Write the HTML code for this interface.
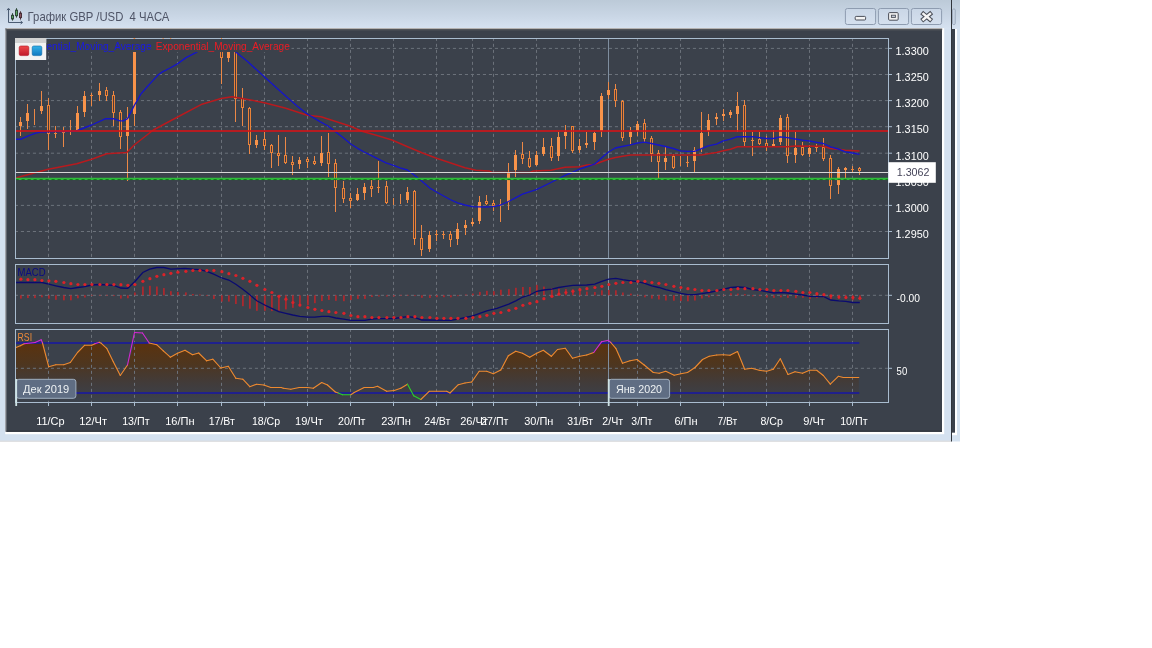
<!DOCTYPE html>
<html lang="ru"><head><meta charset="utf-8"><title>График GBP /USD 4 ЧАСА</title>
<style>html,body{margin:0;padding:0;background:#fff;overflow:hidden}svg{display:block;will-change:transform}text{white-space:pre}</style></head>
<body>
<svg width="1152" height="648" viewBox="0 0 1152 648">
<defs>
<linearGradient id="tb" x1="0" y1="0" x2="0" y2="1"><stop offset="0" stop-color="#bccad8"/><stop offset="0.5" stop-color="#c8d5e4"/><stop offset="1" stop-color="#d6e2f1"/></linearGradient>
<linearGradient id="rsi" gradientUnits="userSpaceOnUse" x1="0" y1="336" x2="0" y2="398"><stop offset="0" stop-color="#633104" stop-opacity="0.95"/><stop offset="0.45" stop-color="#583008" stop-opacity="0.66"/><stop offset="1" stop-color="#4a3020" stop-opacity="0.05"/></linearGradient>
<linearGradient id="btn" x1="0" y1="0" x2="0" y2="1"><stop offset="0" stop-color="#c9d6e6"/><stop offset="1" stop-color="#d5e0ee"/></linearGradient>
<linearGradient id="lr" x1="0" y1="0" x2="0" y2="1"><stop offset="0" stop-color="#ee4a4a"/><stop offset="1" stop-color="#c0182a"/></linearGradient>
<linearGradient id="lb" x1="0" y1="0" x2="0" y2="1"><stop offset="0" stop-color="#35b2e8"/><stop offset="1" stop-color="#0f78c0"/></linearGradient>
<clipPath id="cm"><rect x="16" y="52" width="872.5" height="206.5"/></clipPath>
<clipPath id="cmf"><rect x="16" y="39" width="872.5" height="219.5"/></clipPath>
<clipPath id="cr"><rect x="16" y="343.2" width="872.5" height="59"/></clipPath>
</defs>
<rect x="0" y="0" width="1152" height="648" fill="#ffffff"/>
<rect x="951" y="0" width="9" height="441.5" fill="#d5e2f0"/>
<rect x="951" y="0" width="9" height="29" fill="url(#tb)"/>
<rect x="952" y="29" width="3" height="403.8" fill="#3b414b"/>
<rect x="955" y="29" width="2" height="406" fill="#ffffff"/>
<rect x="952" y="432.8" width="5" height="2.4" fill="#ffffff"/>
<rect x="952.6" y="9" width="2.6" height="15.5" rx="1" fill="#ccd8e8" stroke="#8f9db0" stroke-width="0.8"/>
<rect x="0" y="0" width="951" height="441.5" fill="#d4e1f0"/>
<rect x="0" y="0" width="951" height="29" fill="url(#tb)"/>
<rect x="0" y="440.6" width="951" height="1.2" fill="#dddddd"/>
<rect x="951" y="0" width="1" height="441.5" fill="#30343b"/>
<rect x="5.2" y="28.2" width="939" height="406" fill="#ffffff"/>
<rect x="5.2" y="28.2" width="937" height="1" fill="#a3a19e"/>
<rect x="5.2" y="29.2" width="937" height="1" fill="#5c5d60"/>
<rect x="5.2" y="28.2" width="1.6" height="403.6" fill="#8a8e96"/>
<rect x="6.4" y="29.3" width="935.6" height="402.5" fill="#3b414b"/>
<rect x="6.4" y="29.2" width="935.6" height="1.2" fill="#53555a"/>
<rect x="6.4" y="430.6" width="935.6" height="1.2" fill="#2f343d"/>
<g fill="none" stroke="#4b5c73" stroke-width="1">
<path d="M8.5 9 V22.5 H22"/><path d="M7 10.2 L8.5 8.2 L10 10.2 M20.6 21 L22.6 22.5 L20.6 24"/>
</g>
<g stroke="#2f4a3a" stroke-width="1">
<path d="M12.5 13.2V20.6" /><rect x="11.5" y="15.3" width="2" height="3.6" fill="#5aa860"/>
<path d="M16.5 8.2V17.6"/><rect x="15.5" y="10.2" width="2" height="5.5" fill="#5aa860"/>
</g>
<g stroke="#4a3038" stroke-width="1"><path d="M20.5 11.3V19.6"/><rect x="19.5" y="13.2" width="2" height="4.4" fill="#8a5560"/></g>
<text x="27.6" y="20.6" font-family="'Liberation Sans', sans-serif" font-size="12.6" fill="#4e5466" textLength="141.8" lengthAdjust="spacingAndGlyphs" xml:space="preserve">График GBP /USD  4 ЧАСА</text>
<rect x="845.4" y="8.5" width="30.2" height="16" rx="2" fill="url(#btn)" stroke="#8e9cb0" stroke-width="1"/>
<rect x="878.4" y="8.5" width="30.2" height="16" rx="2" fill="url(#btn)" stroke="#8e9cb0" stroke-width="1"/>
<rect x="911.4" y="8.5" width="30.2" height="16" rx="2" fill="url(#btn)" stroke="#8e9cb0" stroke-width="1"/>
<rect x="855.2" y="16.4" width="10.4" height="3.6" rx="1" fill="#f4f4f4" stroke="#4a4e58" stroke-width="1"/>
<rect x="888.6" y="12.6" width="9.6" height="7.6" rx="1" fill="#f0f0f0" stroke="#4a4e58" stroke-width="1"/>
<rect x="891.4" y="15.2" width="4" height="2.2" fill="#c8d0dc" stroke="#4a4e58" stroke-width="0.9"/>
<path d="M923.4 13.9 L930 19.4 M930 13.9 L923.4 19.4" stroke="#4a4e58" stroke-width="4.5" stroke-linecap="square" fill="none"/>
<path d="M923.4 13.9 L930 19.4 M930 13.9 L923.4 19.4" stroke="#f4f4f4" stroke-width="2.5" stroke-linecap="square" fill="none"/>
<polygon points="16.0,347.5 20.3,345.8 24.2,343.8 35.0,343.2 41.2,343.2 42.5,343.2 48.7,366.7 55.8,364.7 63.7,364.7 70.3,362.5 77.5,352.5 84.5,345.3 91.7,345.3 95.0,343.7 99.2,343.2 101.3,343.3 106.7,348.3 113.3,361.7 120.3,375.5 127.5,365.0 134.5,343.2 142.5,343.2 149.2,343.2 156.7,344.7 163.3,350.8 170.3,357.2 177.5,353.3 185.0,350.3 192.5,354.7 198.7,353.0 206.7,360.8 212.8,359.2 220.8,368.0 228.3,366.3 235.8,378.3 242.8,379.2 249.8,386.7 256.7,384.2 263.8,385.0 270.8,387.5 281.3,387.5 283.3,388.3 290.8,389.2 299.2,387.5 307.5,387.5 313.3,388.3 321.7,382.5 327.5,385.0 335.3,392.0 338.3,393.0 342.5,394.7 350.8,394.7 354.2,392.5 364.2,387.5 373.3,387.5 377.5,386.3 386.7,391.3 394.2,390.5 400.8,388.3 407.5,384.2 413.7,395.8 420.8,399.5 429.2,391.3 446.7,391.3 450.0,393.0 458.3,384.7 465.0,383.0 471.7,382.0 479.2,371.3 486.7,371.3 493.3,373.7 500.8,370.0 508.3,355.8 515.8,351.2 522.5,353.3 529.7,357.2 536.7,353.3 543.3,350.3 551.3,356.3 557.5,349.5 565.3,348.3 572.5,358.3 579.7,356.3 586.7,355.0 593.7,352.5 601.7,343.2 608.3,343.2 610.8,343.2 615.8,348.3 622.5,363.3 630.0,360.8 637.0,359.5 644.2,365.0 653.3,372.5 659.2,373.3 665.8,371.3 674.2,375.3 680.8,373.7 687.5,372.5 695.0,367.5 702.5,359.5 709.2,356.3 716.7,355.0 723.3,354.7 730.0,355.3 737.5,351.5 744.7,369.2 751.7,368.3 759.2,370.3 766.7,371.3 773.3,369.2 780.3,358.8 788.0,374.5 795.0,371.7 802.5,373.3 809.5,370.3 816.7,370.3 823.3,375.5 830.3,384.2 838.3,376.3 843.3,377.5 858.8,377.5 858.8,398 16,398" fill="url(#rsi)"/>
<g stroke="#6b717a" stroke-width="1" stroke-dasharray="3.1 2.9" fill="none">
<path d="M48.5 52.2V258.5" stroke-dashoffset="2.4"/>
<path d="M91.5 52.2V258.5" stroke-dashoffset="2.4"/>
<path d="M134.5 52.2V258.5" stroke-dashoffset="2.4"/>
<path d="M177.5 52.2V258.5" stroke-dashoffset="2.4"/>
<path d="M221.5 52.2V258.5" stroke-dashoffset="2.4"/>
<path d="M264.5 52.2V258.5" stroke-dashoffset="2.4"/>
<path d="M307.5 38.5V258.5" stroke-dashoffset="0.7"/>
<path d="M350.5 38.5V258.5" stroke-dashoffset="0.7"/>
<path d="M393.5 38.5V258.5" stroke-dashoffset="0.7"/>
<path d="M436.5 38.5V258.5" stroke-dashoffset="0.7"/>
<path d="M472.5 38.5V258.5" stroke-dashoffset="0.7"/>
<path d="M493.5 38.5V258.5" stroke-dashoffset="0.7"/>
<path d="M536.5 38.5V258.5" stroke-dashoffset="0.7"/>
<path d="M579.5 38.5V258.5" stroke-dashoffset="0.7"/>
<path d="M637.5 38.5V258.5" stroke-dashoffset="0.7"/>
<path d="M680.5 38.5V258.5" stroke-dashoffset="0.7"/>
<path d="M723.5 38.5V258.5" stroke-dashoffset="0.7"/>
<path d="M766.5 38.5V258.5" stroke-dashoffset="0.7"/>
<path d="M809.5 38.5V258.5" stroke-dashoffset="0.7"/>
<path d="M852.5 38.5V258.5" stroke-dashoffset="0.7"/>
<path d="M48.5 264.5V323.5" stroke-dashoffset="0.7"/>
<path d="M91.5 264.5V323.5" stroke-dashoffset="0.7"/>
<path d="M134.5 264.5V323.5" stroke-dashoffset="0.7"/>
<path d="M177.5 264.5V323.5" stroke-dashoffset="0.7"/>
<path d="M221.5 264.5V323.5" stroke-dashoffset="0.7"/>
<path d="M264.5 264.5V323.5" stroke-dashoffset="0.7"/>
<path d="M307.5 264.5V323.5" stroke-dashoffset="0.7"/>
<path d="M350.5 264.5V323.5" stroke-dashoffset="0.7"/>
<path d="M393.5 264.5V323.5" stroke-dashoffset="0.7"/>
<path d="M436.5 264.5V323.5" stroke-dashoffset="0.7"/>
<path d="M472.5 264.5V323.5" stroke-dashoffset="0.7"/>
<path d="M493.5 264.5V323.5" stroke-dashoffset="0.7"/>
<path d="M536.5 264.5V323.5" stroke-dashoffset="0.7"/>
<path d="M579.5 264.5V323.5" stroke-dashoffset="0.7"/>
<path d="M637.5 264.5V323.5" stroke-dashoffset="0.7"/>
<path d="M680.5 264.5V323.5" stroke-dashoffset="0.7"/>
<path d="M723.5 264.5V323.5" stroke-dashoffset="0.7"/>
<path d="M766.5 264.5V323.5" stroke-dashoffset="0.7"/>
<path d="M809.5 264.5V323.5" stroke-dashoffset="0.7"/>
<path d="M852.5 264.5V323.5" stroke-dashoffset="0.7"/>
<path d="M48.5 329.5V402.5" stroke-dashoffset="0.7"/>
<path d="M91.5 329.5V402.5" stroke-dashoffset="0.7"/>
<path d="M134.5 329.5V402.5" stroke-dashoffset="0.7"/>
<path d="M177.5 329.5V402.5" stroke-dashoffset="0.7"/>
<path d="M221.5 329.5V402.5" stroke-dashoffset="0.7"/>
<path d="M264.5 329.5V402.5" stroke-dashoffset="0.7"/>
<path d="M307.5 329.5V402.5" stroke-dashoffset="0.7"/>
<path d="M350.5 329.5V402.5" stroke-dashoffset="0.7"/>
<path d="M393.5 329.5V402.5" stroke-dashoffset="0.7"/>
<path d="M436.5 329.5V402.5" stroke-dashoffset="0.7"/>
<path d="M472.5 329.5V402.5" stroke-dashoffset="0.7"/>
<path d="M493.5 329.5V402.5" stroke-dashoffset="0.7"/>
<path d="M536.5 329.5V402.5" stroke-dashoffset="0.7"/>
<path d="M579.5 329.5V402.5" stroke-dashoffset="0.7"/>
<path d="M637.5 329.5V402.5" stroke-dashoffset="0.7"/>
<path d="M680.5 329.5V402.5" stroke-dashoffset="0.7"/>
<path d="M723.5 329.5V402.5" stroke-dashoffset="0.7"/>
<path d="M766.5 329.5V402.5" stroke-dashoffset="0.7"/>
<path d="M809.5 329.5V402.5" stroke-dashoffset="0.7"/>
<path d="M852.5 329.5V402.5" stroke-dashoffset="0.7"/>
<path d="M291.5 48.4H888.5" stroke-dashoffset="0.6"/>
<path d="M15.5 74.5H888.5" stroke-dashoffset="0.6"/>
<path d="M15.5 100.6H888.5" stroke-dashoffset="0.6"/>
<path d="M15.5 126.7H888.5" stroke-dashoffset="0.6"/>
<path d="M15.5 153.2H888.5" stroke-dashoffset="0.6"/>
<path d="M15.5 179.1H888.5" stroke-dashoffset="0.6"/>
<path d="M15.5 205.4H888.5" stroke-dashoffset="0.6"/>
<path d="M15.5 231.5H888.5" stroke-dashoffset="0.6"/>
<path d="M15.5 368.3H888.5" stroke-dashoffset="0.6"/>
<path d="M15.5 295.3H888.5" stroke-dashoffset="0.6"/>
</g>
<path d="M608.5 38.5V258.5" stroke="#7f8e9f" stroke-width="1"/>
<path d="M608.5 264.5V323.5" stroke="#7f8e9f" stroke-width="1"/>
<path d="M608.5 329.5V402.5" stroke="#7f8e9f" stroke-width="1"/>
<g clip-path="url(#cm)">
<rect x="20" y="117" width="1" height="19" fill="#ec8846"/>
<rect x="19" y="122" width="3" height="4" fill="#f8934a"/>
<rect x="27" y="104" width="1" height="25" fill="#ec8846"/>
<rect x="26" y="113" width="3" height="8" fill="#f8934a"/>
<rect x="34" y="109" width="1" height="16" fill="#ec8846"/>
<rect x="41" y="91" width="1" height="23" fill="#ec8846"/>
<rect x="40" y="106" width="3" height="5" fill="#f8934a"/>
<rect x="48" y="98" width="1" height="52" fill="#ec8846"/>
<rect x="47" y="105" width="3" height="29" fill="#ea8238"/>
<rect x="48" y="106" width="1" height="27" fill="#4a3a3c"/>
<rect x="55" y="126" width="1" height="12" fill="#ec8846"/>
<rect x="54" y="133" width="3" height="1" fill="#ea8238"/>
<rect x="63" y="127" width="1" height="20" fill="#ec8846"/>
<rect x="62" y="132" width="3" height="1" fill="#ea8238"/>
<rect x="70" y="120" width="1" height="15" fill="#ec8846"/>
<rect x="77" y="106" width="1" height="24" fill="#ec8846"/>
<rect x="76" y="113" width="3" height="17" fill="#f8934a"/>
<rect x="84" y="91" width="1" height="26" fill="#ec8846"/>
<rect x="83" y="96" width="3" height="16" fill="#f8934a"/>
<rect x="91" y="93" width="1" height="13" fill="#ec8846"/>
<rect x="90" y="95" width="3" height="1" fill="#ea8238"/>
<rect x="99" y="83" width="1" height="18" fill="#ec8846"/>
<rect x="98" y="91" width="3" height="4" fill="#f8934a"/>
<rect x="106" y="87" width="1" height="14" fill="#ec8846"/>
<rect x="105" y="90" width="3" height="6" fill="#ea8238"/>
<rect x="106" y="91" width="1" height="4" fill="#4a3a3c"/>
<rect x="113" y="91" width="1" height="35" fill="#ec8846"/>
<rect x="112" y="95" width="3" height="18" fill="#ea8238"/>
<rect x="113" y="96" width="1" height="16" fill="#4a3a3c"/>
<rect x="120" y="110" width="1" height="39" fill="#ec8846"/>
<rect x="119" y="112" width="3" height="25" fill="#ea8238"/>
<rect x="120" y="113" width="1" height="23" fill="#4a3a3c"/>
<rect x="127" y="107" width="1" height="74" fill="#ec8846"/>
<rect x="126" y="118" width="3" height="18" fill="#f8934a"/>
<rect x="134" y="38" width="1" height="88" fill="#ec8846"/>
<rect x="133" y="44" width="3" height="70" fill="#f8934a"/>
<rect x="221" y="38" width="1" height="46" fill="#ec8846"/>
<rect x="220" y="40" width="3" height="18" fill="#ea8238"/>
<rect x="221" y="41" width="1" height="16" fill="#4a3a3c"/>
<rect x="228" y="38" width="1" height="24" fill="#ec8846"/>
<rect x="227" y="44" width="3" height="14" fill="#f8934a"/>
<rect x="235" y="40" width="1" height="82" fill="#ec8846"/>
<rect x="234" y="42" width="3" height="57" fill="#ea8238"/>
<rect x="235" y="43" width="1" height="55" fill="#4a3a3c"/>
<rect x="242" y="88" width="1" height="38" fill="#ec8846"/>
<rect x="241" y="98" width="3" height="10" fill="#ea8238"/>
<rect x="242" y="99" width="1" height="8" fill="#4a3a3c"/>
<rect x="249" y="107" width="1" height="47" fill="#ec8846"/>
<rect x="248" y="108" width="3" height="37" fill="#ea8238"/>
<rect x="249" y="109" width="1" height="35" fill="#4a3a3c"/>
<rect x="256" y="135" width="1" height="13" fill="#ec8846"/>
<rect x="255" y="140" width="3" height="5" fill="#f8934a"/>
<rect x="264" y="132" width="1" height="18" fill="#ec8846"/>
<rect x="263" y="139" width="3" height="7" fill="#ea8238"/>
<rect x="264" y="140" width="1" height="5" fill="#4a3a3c"/>
<rect x="271" y="144" width="1" height="24" fill="#ec8846"/>
<rect x="270" y="145" width="3" height="8" fill="#ea8238"/>
<rect x="271" y="146" width="1" height="6" fill="#4a3a3c"/>
<rect x="278" y="135" width="1" height="31" fill="#ec8846"/>
<rect x="277" y="153" width="3" height="3" fill="#ea8238"/>
<rect x="278" y="154" width="1" height="1" fill="#4a3a3c"/>
<rect x="285" y="137" width="1" height="27" fill="#ec8846"/>
<rect x="284" y="155" width="3" height="8" fill="#ea8238"/>
<rect x="285" y="156" width="1" height="6" fill="#4a3a3c"/>
<rect x="292" y="156" width="1" height="19" fill="#ec8846"/>
<rect x="291" y="162" width="3" height="3" fill="#ea8238"/>
<rect x="292" y="163" width="1" height="1" fill="#4a3a3c"/>
<rect x="299" y="157" width="1" height="12" fill="#ec8846"/>
<rect x="298" y="160" width="3" height="4" fill="#f8934a"/>
<rect x="307" y="157" width="1" height="11" fill="#ec8846"/>
<rect x="306" y="159" width="3" height="3" fill="#ea8238"/>
<rect x="307" y="160" width="1" height="1" fill="#4a3a3c"/>
<rect x="314" y="156" width="1" height="9" fill="#ec8846"/>
<rect x="313" y="161" width="3" height="3" fill="#ea8238"/>
<rect x="314" y="162" width="1" height="1" fill="#4a3a3c"/>
<rect x="321" y="136" width="1" height="30" fill="#ec8846"/>
<rect x="320" y="153" width="3" height="10" fill="#f8934a"/>
<rect x="328" y="133" width="1" height="44" fill="#ec8846"/>
<rect x="327" y="152" width="3" height="12" fill="#ea8238"/>
<rect x="328" y="153" width="1" height="10" fill="#4a3a3c"/>
<rect x="335" y="159" width="1" height="53" fill="#ec8846"/>
<rect x="334" y="163" width="3" height="25" fill="#ea8238"/>
<rect x="335" y="164" width="1" height="23" fill="#4a3a3c"/>
<rect x="343" y="181" width="1" height="22" fill="#ec8846"/>
<rect x="342" y="188" width="3" height="11" fill="#ea8238"/>
<rect x="343" y="189" width="1" height="9" fill="#4a3a3c"/>
<rect x="350" y="193" width="1" height="15" fill="#ec8846"/>
<rect x="349" y="198" width="3" height="3" fill="#ea8238"/>
<rect x="350" y="199" width="1" height="1" fill="#4a3a3c"/>
<rect x="357" y="188" width="1" height="13" fill="#ec8846"/>
<rect x="356" y="194" width="3" height="6" fill="#f8934a"/>
<rect x="364" y="183" width="1" height="17" fill="#ec8846"/>
<rect x="363" y="187" width="3" height="6" fill="#f8934a"/>
<rect x="371" y="180" width="1" height="17" fill="#ec8846"/>
<rect x="370" y="186" width="3" height="3" fill="#ea8238"/>
<rect x="371" y="187" width="1" height="1" fill="#4a3a3c"/>
<rect x="378" y="161" width="1" height="32" fill="#ec8846"/>
<rect x="377" y="187" width="3" height="1" fill="#ea8238"/>
<rect x="386" y="181" width="1" height="23" fill="#ec8846"/>
<rect x="385" y="186" width="3" height="17" fill="#ea8238"/>
<rect x="386" y="187" width="1" height="15" fill="#4a3a3c"/>
<rect x="393" y="198" width="1" height="7" fill="#ec8846"/>
<rect x="400" y="194" width="1" height="10" fill="#ec8846"/>
<rect x="407" y="187" width="1" height="16" fill="#ec8846"/>
<rect x="406" y="192" width="3" height="8" fill="#f8934a"/>
<rect x="414" y="190" width="1" height="55" fill="#ec8846"/>
<rect x="413" y="191" width="3" height="48" fill="#ea8238"/>
<rect x="414" y="192" width="1" height="46" fill="#4a3a3c"/>
<rect x="421" y="225" width="1" height="31" fill="#ec8846"/>
<rect x="420" y="238" width="3" height="12" fill="#ea8238"/>
<rect x="421" y="239" width="1" height="10" fill="#4a3a3c"/>
<rect x="429" y="231" width="1" height="21" fill="#ec8846"/>
<rect x="428" y="235" width="3" height="14" fill="#f8934a"/>
<rect x="436" y="230" width="1" height="11" fill="#ec8846"/>
<rect x="435" y="234" width="3" height="1" fill="#ea8238"/>
<rect x="443" y="231" width="1" height="8" fill="#ec8846"/>
<rect x="442" y="234" width="3" height="1" fill="#ea8238"/>
<rect x="450" y="231" width="1" height="16" fill="#ec8846"/>
<rect x="449" y="234" width="3" height="6" fill="#ea8238"/>
<rect x="450" y="235" width="1" height="4" fill="#4a3a3c"/>
<rect x="457" y="223" width="1" height="22" fill="#ec8846"/>
<rect x="456" y="229" width="3" height="10" fill="#f8934a"/>
<rect x="465" y="220" width="1" height="15" fill="#ec8846"/>
<rect x="464" y="225" width="3" height="3" fill="#f8934a"/>
<rect x="472" y="218" width="1" height="8" fill="#ec8846"/>
<rect x="471" y="222" width="3" height="2" fill="#f8934a"/>
<rect x="479" y="196" width="1" height="28" fill="#ec8846"/>
<rect x="478" y="202" width="3" height="19" fill="#f8934a"/>
<rect x="486" y="195" width="1" height="10" fill="#ec8846"/>
<rect x="485" y="201" width="3" height="3" fill="#ea8238"/>
<rect x="486" y="202" width="1" height="1" fill="#4a3a3c"/>
<rect x="493" y="200" width="1" height="11" fill="#ec8846"/>
<rect x="492" y="203" width="3" height="3" fill="#ea8238"/>
<rect x="493" y="204" width="1" height="1" fill="#4a3a3c"/>
<rect x="500" y="199" width="1" height="23" fill="#ec8846"/>
<rect x="499" y="204" width="3" height="1" fill="#ea8238"/>
<rect x="508" y="163" width="1" height="47" fill="#ec8846"/>
<rect x="507" y="172" width="3" height="30" fill="#f8934a"/>
<rect x="515" y="150" width="1" height="27" fill="#ec8846"/>
<rect x="514" y="155" width="3" height="15" fill="#f8934a"/>
<rect x="522" y="142" width="1" height="22" fill="#ec8846"/>
<rect x="521" y="154" width="3" height="5" fill="#ea8238"/>
<rect x="522" y="155" width="1" height="3" fill="#4a3a3c"/>
<rect x="529" y="151" width="1" height="17" fill="#ec8846"/>
<rect x="528" y="158" width="3" height="9" fill="#ea8238"/>
<rect x="529" y="159" width="1" height="7" fill="#4a3a3c"/>
<rect x="536" y="151" width="1" height="15" fill="#ec8846"/>
<rect x="535" y="155" width="3" height="10" fill="#f8934a"/>
<rect x="543" y="138" width="1" height="18" fill="#ec8846"/>
<rect x="542" y="147" width="3" height="7" fill="#f8934a"/>
<rect x="551" y="138" width="1" height="23" fill="#ec8846"/>
<rect x="550" y="146" width="3" height="12" fill="#ea8238"/>
<rect x="551" y="147" width="1" height="10" fill="#4a3a3c"/>
<rect x="558" y="132" width="1" height="29" fill="#ec8846"/>
<rect x="557" y="137" width="3" height="19" fill="#f8934a"/>
<rect x="565" y="125" width="1" height="24" fill="#ec8846"/>
<rect x="564" y="132" width="3" height="4" fill="#f8934a"/>
<rect x="572" y="126" width="1" height="27" fill="#ec8846"/>
<rect x="571" y="126" width="3" height="25" fill="#ea8238"/>
<rect x="572" y="127" width="1" height="23" fill="#4a3a3c"/>
<rect x="579" y="139" width="1" height="14" fill="#ec8846"/>
<rect x="578" y="146" width="3" height="4" fill="#f8934a"/>
<rect x="586" y="132" width="1" height="16" fill="#ec8846"/>
<rect x="585" y="143" width="3" height="2" fill="#f8934a"/>
<rect x="594" y="132" width="1" height="18" fill="#ec8846"/>
<rect x="593" y="133" width="3" height="9" fill="#f8934a"/>
<rect x="601" y="93" width="1" height="44" fill="#ec8846"/>
<rect x="600" y="96" width="3" height="35" fill="#f8934a"/>
<rect x="608" y="82" width="1" height="17" fill="#ec8846"/>
<rect x="607" y="90" width="3" height="5" fill="#f8934a"/>
<rect x="615" y="84" width="1" height="23" fill="#ec8846"/>
<rect x="614" y="89" width="3" height="12" fill="#ea8238"/>
<rect x="615" y="90" width="1" height="10" fill="#4a3a3c"/>
<rect x="622" y="100" width="1" height="41" fill="#ec8846"/>
<rect x="621" y="101" width="3" height="37" fill="#ea8238"/>
<rect x="622" y="102" width="1" height="35" fill="#4a3a3c"/>
<rect x="630" y="127" width="1" height="17" fill="#ec8846"/>
<rect x="629" y="132" width="3" height="5" fill="#f8934a"/>
<rect x="637" y="121" width="1" height="15" fill="#ec8846"/>
<rect x="636" y="124" width="3" height="7" fill="#f8934a"/>
<rect x="644" y="119" width="1" height="23" fill="#ec8846"/>
<rect x="643" y="123" width="3" height="16" fill="#ea8238"/>
<rect x="644" y="124" width="1" height="14" fill="#4a3a3c"/>
<rect x="651" y="136" width="1" height="26" fill="#ec8846"/>
<rect x="650" y="138" width="3" height="16" fill="#ea8238"/>
<rect x="651" y="139" width="1" height="14" fill="#4a3a3c"/>
<rect x="658" y="150" width="1" height="28" fill="#ec8846"/>
<rect x="657" y="153" width="3" height="9" fill="#ea8238"/>
<rect x="658" y="154" width="1" height="7" fill="#4a3a3c"/>
<rect x="665" y="147" width="1" height="23" fill="#ec8846"/>
<rect x="664" y="158" width="3" height="4" fill="#f8934a"/>
<rect x="673" y="154" width="1" height="15" fill="#ec8846"/>
<rect x="672" y="156" width="3" height="12" fill="#ea8238"/>
<rect x="673" y="157" width="1" height="10" fill="#4a3a3c"/>
<rect x="680" y="156" width="1" height="10" fill="#ec8846"/>
<rect x="687" y="156" width="1" height="11" fill="#ec8846"/>
<rect x="686" y="162" width="3" height="1" fill="#ea8238"/>
<rect x="694" y="147" width="1" height="25" fill="#ec8846"/>
<rect x="693" y="150" width="3" height="11" fill="#f8934a"/>
<rect x="701" y="112" width="1" height="40" fill="#ec8846"/>
<rect x="700" y="133" width="3" height="16" fill="#f8934a"/>
<rect x="708" y="114" width="1" height="22" fill="#ec8846"/>
<rect x="707" y="120" width="3" height="11" fill="#f8934a"/>
<rect x="716" y="113" width="1" height="12" fill="#ec8846"/>
<rect x="715" y="117" width="3" height="2" fill="#f8934a"/>
<rect x="723" y="109" width="1" height="12" fill="#ec8846"/>
<rect x="722" y="114" width="3" height="2" fill="#f8934a"/>
<rect x="730" y="110" width="1" height="8" fill="#ec8846"/>
<rect x="729" y="112" width="3" height="3" fill="#f8934a"/>
<rect x="737" y="92" width="1" height="40" fill="#ec8846"/>
<rect x="736" y="106" width="3" height="8" fill="#f8934a"/>
<rect x="744" y="100" width="1" height="47" fill="#ec8846"/>
<rect x="743" y="105" width="3" height="37" fill="#ea8238"/>
<rect x="744" y="106" width="1" height="35" fill="#4a3a3c"/>
<rect x="752" y="132" width="1" height="24" fill="#ec8846"/>
<rect x="751" y="140" width="3" height="1" fill="#ea8238"/>
<rect x="759" y="132" width="1" height="13" fill="#ec8846"/>
<rect x="758" y="139" width="3" height="5" fill="#ea8238"/>
<rect x="759" y="140" width="1" height="3" fill="#4a3a3c"/>
<rect x="766" y="136" width="1" height="15" fill="#ec8846"/>
<rect x="765" y="143" width="3" height="4" fill="#ea8238"/>
<rect x="766" y="144" width="1" height="2" fill="#4a3a3c"/>
<rect x="773" y="130" width="1" height="17" fill="#ec8846"/>
<rect x="772" y="144" width="3" height="2" fill="#f8934a"/>
<rect x="780" y="115" width="1" height="30" fill="#ec8846"/>
<rect x="779" y="118" width="3" height="24" fill="#f8934a"/>
<rect x="787" y="114" width="1" height="49" fill="#ec8846"/>
<rect x="786" y="117" width="3" height="39" fill="#ea8238"/>
<rect x="787" y="118" width="1" height="37" fill="#4a3a3c"/>
<rect x="795" y="132" width="1" height="31" fill="#ec8846"/>
<rect x="794" y="148" width="3" height="7" fill="#f8934a"/>
<rect x="802" y="142" width="1" height="14" fill="#ec8846"/>
<rect x="801" y="147" width="3" height="8" fill="#ea8238"/>
<rect x="802" y="148" width="1" height="6" fill="#4a3a3c"/>
<rect x="809" y="145" width="1" height="12" fill="#ec8846"/>
<rect x="808" y="148" width="3" height="6" fill="#f8934a"/>
<rect x="816" y="144" width="1" height="8" fill="#ec8846"/>
<rect x="815" y="147" width="3" height="1" fill="#ea8238"/>
<rect x="823" y="138" width="1" height="23" fill="#ec8846"/>
<rect x="822" y="147" width="3" height="12" fill="#ea8238"/>
<rect x="823" y="148" width="1" height="10" fill="#4a3a3c"/>
<rect x="830" y="155" width="1" height="44" fill="#ec8846"/>
<rect x="829" y="158" width="3" height="28" fill="#ea8238"/>
<rect x="830" y="159" width="1" height="26" fill="#4a3a3c"/>
<rect x="838" y="167" width="1" height="27" fill="#ec8846"/>
<rect x="837" y="169" width="3" height="16" fill="#f8934a"/>
<rect x="845" y="167" width="1" height="11" fill="#ec8846"/>
<rect x="844" y="168" width="3" height="2" fill="#f8934a"/>
<rect x="852" y="166" width="1" height="6" fill="#ec8846"/>
<rect x="851" y="169" width="3" height="1" fill="#ea8238"/>
<rect x="859" y="167" width="1" height="8" fill="#ec8846"/>
<rect x="858" y="168" width="3" height="3" fill="#ea8238"/>
<rect x="859" y="169" width="1" height="1" fill="#4a3a3c"/>
</g>
<polyline clip-path="url(#cm)" points="16.0,178.0 17.5,177.5 35.0,172.8 48.3,169.2 76.7,163.7 91.7,159.2 106.7,153.7 126.7,152.5 134.2,145.0 153.3,130.0 176.7,117.5 202.0,104.2 207.0,102.7 221.0,98.5 232.0,96.8 245.0,99.0 264.3,102.7 285.0,108.0 307.3,115.3 321.0,116.7 328.0,119.0 350.5,126.3 362.0,131.3 378.0,135.8 392.0,140.0 407.0,146.5 422.5,153.0 436.5,158.3 450.0,162.8 465.0,167.8 476.0,170.3 489.0,170.9 492.0,172.5 530.0,172.5 533.3,170.9 551.0,170.3 558.0,168.7 565.0,167.2 579.5,166.7 587.0,165.0 594.5,164.4 601.5,161.7 608.5,159.2 615.5,157.5 622.5,156.3 630.5,155.0 701.5,155.0 708.3,153.7 716.5,152.5 723.3,150.8 730.5,149.2 737.5,146.7 787.5,146.8 795.3,146.0 823.3,146.3 830.5,148.5 838.3,149.3 845.3,150.2 859.5,151.0" fill="none" stroke="#b81a1e" stroke-width="1.5" stroke-linejoin="round"/>
<polyline clip-path="url(#cm)" points="15.5,139.2 20.8,139.2 28.3,135.8 35.0,133.3 40.0,132.2 55.0,131.5 74.2,131.3 77.5,130.5 91.7,125.0 105.8,118.7 113.3,118.7 120.0,120.8 123.3,120.8 127.5,118.7 134.5,105.0 137.5,100.2 140.6,94.4 147.2,86.8 152.8,80.6 158.3,74.7 162.5,71.9 170.1,68.0 177.4,63.9 186.1,57.6 195.8,52.6 206.0,46.0 216.0,43.5 226.0,46.0 235.8,52.0 247.0,61.0 264.3,76.8 280.0,91.0 297.0,106.0 307.3,114.0 320.0,121.7 328.0,126.0 335.5,131.7 343.0,137.5 350.5,143.7 357.5,148.3 364.2,152.0 371.5,155.7 386.0,162.8 393.5,165.3 400.0,167.8 407.5,170.0 414.5,175.3 421.3,180.7 429.5,187.8 436.5,192.0 450.0,199.5 457.5,202.8 465.0,205.0 472.5,206.7 486.0,207.0 493.3,206.7 500.5,205.0 508.5,201.5 515.5,197.8 522.5,194.2 536.3,189.7 551.0,182.5 565.0,175.3 572.0,172.5 579.5,169.2 594.5,164.2 601.5,158.0 608.5,152.0 615.3,148.0 622.3,146.5 630.5,144.8 637.5,143.0 644.5,142.2 651.3,143.5 658.5,145.0 665.4,146.5 673.3,148.5 680.5,150.8 687.5,151.3 694.5,151.3 701.5,148.7 708.3,145.8 716.5,144.2 723.3,140.8 730.5,139.2 737.5,136.7 752.5,136.7 759.5,137.6 766.3,138.5 773.3,138.5 780.3,136.8 787.5,137.7 795.3,139.0 802.5,140.2 809.5,141.0 816.7,142.3 823.3,143.5 830.5,146.8 838.3,149.0 845.3,151.8 852.5,153.0 859.5,154.3" fill="none" stroke="#1515c8" stroke-width="1.35" stroke-linejoin="round"/>
<path d="M15.5 131H888.5" stroke="#d21418" stroke-width="2.2" opacity="0.82"/>
<path d="M15.5 172.5H888.5" stroke="#d6d6d6" stroke-width="1.2"/>
<path d="M15.5 178.9H888.5" stroke="#2fc43a" stroke-width="2.3" opacity="0.93"/>
<path d="M15.5 179.6H888.5" stroke="#0f7a18" stroke-width="1" stroke-dasharray="3.2 2.8"/>
<g fill="#b9262b">
<rect x="20.1" y="295.3" width="1.6" height="3.3"/>
<rect x="27.1" y="295.3" width="1.6" height="2.8"/>
<rect x="34.1" y="295.3" width="1.6" height="2.8"/>
<rect x="41.1" y="295.3" width="1.6" height="2.0"/>
<rect x="48.1" y="295.3" width="1.6" height="3.4"/>
<rect x="55.1" y="295.3" width="1.6" height="4.5"/>
<rect x="63.1" y="295.3" width="1.6" height="5.0"/>
<rect x="70.1" y="295.3" width="1.6" height="5.0"/>
<rect x="77.1" y="295.3" width="1.6" height="3.0"/>
<rect x="84.1" y="295.3" width="1.6" height="2.2"/>
<rect x="91.1" y="294.8" width="1.6" height="1" opacity="0.7"/>
<rect x="99.1" y="294.8" width="1.6" height="1" opacity="0.7"/>
<rect x="106.1" y="294.8" width="1.6" height="1" opacity="0.7"/>
<rect x="113.1" y="295.3" width="1.6" height="0.8"/>
<rect x="120.1" y="295.3" width="1.6" height="3.3"/>
<rect x="127.1" y="295.3" width="1.6" height="3.0"/>
<rect x="134.1" y="292.5" width="1.6" height="2.8"/>
<rect x="142.1" y="286.5" width="1.6" height="8.8"/>
<rect x="149.1" y="285.8" width="1.6" height="9.5"/>
<rect x="156.1" y="286.5" width="1.6" height="8.8"/>
<rect x="163.1" y="288.1" width="1.6" height="7.2"/>
<rect x="170.1" y="291.2" width="1.6" height="4.1"/>
<rect x="177.1" y="291.9" width="1.6" height="3.4"/>
<rect x="185.1" y="292.4" width="1.6" height="2.9"/>
<rect x="192.1" y="294.0" width="1.6" height="1.3"/>
<rect x="199.1" y="294.5" width="1.6" height="0.8"/>
<rect x="206.1" y="295.3" width="1.6" height="0.8"/>
<rect x="213.1" y="295.3" width="1.6" height="3.7"/>
<rect x="221.1" y="295.3" width="1.6" height="6.3"/>
<rect x="228.1" y="295.3" width="1.6" height="6.3"/>
<rect x="235.1" y="295.3" width="1.6" height="8.7"/>
<rect x="242.1" y="295.3" width="1.6" height="10.9"/>
<rect x="249.1" y="295.3" width="1.6" height="13.4"/>
<rect x="256.1" y="295.3" width="1.6" height="15.5"/>
<rect x="264.1" y="295.3" width="1.6" height="15.5"/>
<rect x="271.1" y="295.3" width="1.6" height="15.8"/>
<rect x="278.1" y="295.3" width="1.6" height="15.4"/>
<rect x="285.1" y="295.3" width="1.6" height="14.1"/>
<rect x="292.1" y="295.3" width="1.6" height="12.5"/>
<rect x="299.1" y="295.3" width="1.6" height="11.3"/>
<rect x="307.1" y="295.3" width="1.6" height="9.7"/>
<rect x="314.1" y="295.3" width="1.6" height="7.9"/>
<rect x="321.1" y="295.3" width="1.6" height="5.8"/>
<rect x="328.1" y="295.3" width="1.6" height="4.6"/>
<rect x="335.1" y="295.3" width="1.6" height="5.5"/>
<rect x="343.1" y="295.3" width="1.6" height="5.9"/>
<rect x="350.1" y="295.3" width="1.6" height="4.8"/>
<rect x="357.1" y="295.3" width="1.6" height="3.6"/>
<rect x="364.1" y="295.3" width="1.6" height="3.6"/>
<rect x="371.1" y="295.3" width="1.6" height="1.7"/>
<rect x="378.1" y="295.3" width="1.6" height="1.2"/>
<rect x="386.1" y="295.3" width="1.6" height="1.2"/>
<rect x="393.1" y="295.3" width="1.6" height="1.2"/>
<rect x="400.1" y="294.8" width="1.6" height="1" opacity="0.7"/>
<rect x="407.1" y="294.8" width="1.6" height="1" opacity="0.7"/>
<rect x="414.1" y="295.3" width="1.6" height="0.8"/>
<rect x="421.1" y="295.3" width="1.6" height="2.5"/>
<rect x="429.1" y="295.3" width="1.6" height="2.6"/>
<rect x="436.1" y="295.3" width="1.6" height="1.9"/>
<rect x="443.1" y="295.3" width="1.6" height="1.9"/>
<rect x="450.1" y="295.3" width="1.6" height="2.0"/>
<rect x="457.1" y="295.3" width="1.6" height="0.9"/>
<rect x="465.1" y="294.5" width="1.6" height="0.8"/>
<rect x="472.1" y="293.6" width="1.6" height="1.7"/>
<rect x="479.1" y="291.9" width="1.6" height="3.4"/>
<rect x="486.1" y="290.8" width="1.6" height="4.5"/>
<rect x="493.1" y="291.2" width="1.6" height="4.1"/>
<rect x="500.1" y="289.7" width="1.6" height="5.6"/>
<rect x="508.1" y="289.2" width="1.6" height="6.1"/>
<rect x="515.1" y="287.8" width="1.6" height="7.5"/>
<rect x="522.1" y="287.0" width="1.6" height="8.3"/>
<rect x="529.1" y="287.0" width="1.6" height="8.3"/>
<rect x="536.1" y="284.9" width="1.6" height="10.4"/>
<rect x="543.1" y="286.6" width="1.6" height="8.7"/>
<rect x="551.1" y="288.2" width="1.6" height="7.1"/>
<rect x="558.1" y="288.6" width="1.6" height="6.7"/>
<rect x="565.1" y="289.1" width="1.6" height="6.2"/>
<rect x="572.1" y="289.3" width="1.6" height="6.0"/>
<rect x="579.1" y="290.8" width="1.6" height="4.6"/>
<rect x="586.1" y="291.6" width="1.6" height="3.7"/>
<rect x="594.1" y="292.0" width="1.6" height="3.3"/>
<rect x="601.1" y="290.3" width="1.6" height="5.0"/>
<rect x="608.1" y="290.0" width="1.6" height="5.3"/>
<rect x="615.1" y="290.3" width="1.6" height="5.0"/>
<rect x="622.1" y="292.5" width="1.6" height="2.8"/>
<rect x="630.1" y="293.6" width="1.6" height="1.7"/>
<rect x="637.1" y="294.8" width="1.6" height="1" opacity="0.7"/>
<rect x="644.1" y="295.3" width="1.6" height="2.0"/>
<rect x="651.1" y="295.3" width="1.6" height="3.3"/>
<rect x="658.1" y="295.3" width="1.6" height="4.2"/>
<rect x="665.1" y="295.3" width="1.6" height="5.2"/>
<rect x="673.1" y="295.3" width="1.6" height="5.4"/>
<rect x="680.1" y="295.3" width="1.6" height="5.8"/>
<rect x="687.1" y="295.3" width="1.6" height="6.0"/>
<rect x="694.1" y="295.3" width="1.6" height="5.2"/>
<rect x="701.1" y="295.3" width="1.6" height="3.2"/>
<rect x="708.1" y="295.3" width="1.6" height="2.0"/>
<rect x="716.1" y="294.8" width="1.6" height="1" opacity="0.7"/>
<rect x="723.1" y="294.8" width="1.6" height="1" opacity="0.7"/>
<rect x="730.1" y="293.3" width="1.6" height="2.0"/>
<rect x="737.1" y="293.6" width="1.6" height="1.7"/>
<rect x="744.1" y="294.1" width="1.6" height="1.2"/>
<rect x="752.1" y="295.3" width="1.6" height="1.0"/>
<rect x="759.1" y="295.3" width="1.6" height="0.8"/>
<rect x="766.1" y="295.3" width="1.6" height="2.2"/>
<rect x="773.1" y="295.3" width="1.6" height="2.5"/>
<rect x="780.1" y="295.3" width="1.6" height="2.0"/>
<rect x="787.1" y="295.3" width="1.6" height="2.5"/>
<rect x="795.1" y="295.3" width="1.6" height="2.9"/>
<rect x="802.1" y="295.3" width="1.6" height="2.5"/>
<rect x="809.1" y="295.3" width="1.6" height="3.8"/>
<rect x="816.1" y="295.3" width="1.6" height="2.8"/>
<rect x="823.1" y="295.3" width="1.6" height="2.0"/>
<rect x="830.1" y="295.3" width="1.6" height="4.2"/>
<rect x="838.1" y="295.3" width="1.6" height="3.8"/>
<rect x="845.1" y="295.3" width="1.6" height="3.8"/>
<rect x="852.1" y="295.3" width="1.6" height="5.0"/>
<rect x="859.1" y="295.3" width="1.6" height="4.2"/>
</g>
<polyline points="15.5,282.5 42.0,282.5 48.8,284.2 55.8,285.8 63.7,287.5 70.8,288.7 77.8,287.5 84.8,286.7 91.7,285.0 99.7,284.5 113.8,285.3 120.8,288.0 127.7,288.3 134.7,281.7 142.8,272.5 149.7,269.2 156.8,267.5 163.8,267.5 170.8,269.2 185.0,268.3 192.8,269.2 199.7,269.7 206.7,271.3 213.7,274.2 221.7,278.0 228.8,280.0 235.8,284.2 242.8,289.2 249.8,294.7 256.8,300.8 264.7,305.0 271.7,308.3 278.8,311.7 285.8,313.3 292.8,315.0 299.8,316.3 307.7,317.2 314.8,317.2 321.8,316.3 328.8,316.3 335.8,318.0 343.7,319.2 350.8,320.3 364.8,320.3 371.8,319.2 378.7,318.7 393.7,318.7 400.8,317.5 407.8,316.7 414.7,317.5 421.7,320.0 450.8,320.3 457.8,319.2 465.8,317.5 472.8,315.8 479.8,313.3 486.8,310.8 493.8,309.2 497.0,308.3 508.8,304.2 515.8,300.8 522.8,297.0 529.8,295.0 536.8,291.3 543.8,290.0 551.7,289.2 558.7,287.5 565.7,286.3 572.8,285.3 586.8,285.0 594.8,284.2 601.8,281.3 608.8,279.2 615.8,278.3 622.8,279.7 630.8,280.8 637.8,281.7 644.8,283.3 651.8,285.8 658.8,287.5 665.8,289.7 673.8,291.7 680.8,293.3 687.8,294.7 694.8,294.7 701.8,293.7 708.8,292.5 716.8,290.8 723.8,289.2 731.0,287.5 737.8,287.0 745.0,287.5 752.8,289.7 759.8,290.3 766.8,291.7 773.8,293.0 780.8,292.5 787.8,293.0 795.8,294.2 802.8,295.0 809.8,296.3 823.8,296.7 830.8,300.0 838.8,300.8 845.8,301.3 852.8,302.5 859.8,302.5" fill="none" stroke="#0a0a70" stroke-width="1.3"/>
<g fill="#dc2229">
<circle cx="20.9" cy="279.2" r="1.6"/>
<circle cx="27.9" cy="279.7" r="1.6"/>
<circle cx="34.9" cy="279.7" r="1.6"/>
<circle cx="41.9" cy="280.5" r="1.6"/>
<circle cx="48.9" cy="280.8" r="1.6"/>
<circle cx="55.9" cy="281.3" r="1.6"/>
<circle cx="63.9" cy="282.5" r="1.6"/>
<circle cx="70.9" cy="283.7" r="1.6"/>
<circle cx="77.9" cy="284.5" r="1.6"/>
<circle cx="84.9" cy="284.5" r="1.6"/>
<circle cx="91.9" cy="284.5" r="1.6"/>
<circle cx="99.9" cy="284.5" r="1.6"/>
<circle cx="106.9" cy="284.5" r="1.6"/>
<circle cx="113.9" cy="284.5" r="1.6"/>
<circle cx="120.9" cy="284.7" r="1.6"/>
<circle cx="127.9" cy="285.3" r="1.6"/>
<circle cx="134.9" cy="284.5" r="1.6"/>
<circle cx="142.9" cy="281.3" r="1.6"/>
<circle cx="149.9" cy="278.7" r="1.6"/>
<circle cx="156.9" cy="276.3" r="1.6"/>
<circle cx="163.9" cy="274.7" r="1.6"/>
<circle cx="170.9" cy="273.3" r="1.6"/>
<circle cx="177.9" cy="272.2" r="1.6"/>
<circle cx="185.9" cy="271.3" r="1.6"/>
<circle cx="192.9" cy="270.5" r="1.6"/>
<circle cx="199.9" cy="270.5" r="1.6"/>
<circle cx="206.9" cy="270.5" r="1.6"/>
<circle cx="213.9" cy="270.5" r="1.6"/>
<circle cx="221.9" cy="271.7" r="1.6"/>
<circle cx="228.9" cy="273.7" r="1.6"/>
<circle cx="235.9" cy="275.5" r="1.6"/>
<circle cx="242.9" cy="278.3" r="1.6"/>
<circle cx="249.9" cy="281.3" r="1.6"/>
<circle cx="256.9" cy="285.3" r="1.6"/>
<circle cx="264.9" cy="289.5" r="1.6"/>
<circle cx="271.9" cy="292.5" r="1.6"/>
<circle cx="278.9" cy="296.3" r="1.6"/>
<circle cx="285.9" cy="299.2" r="1.6"/>
<circle cx="292.9" cy="302.5" r="1.6"/>
<circle cx="299.9" cy="305.0" r="1.6"/>
<circle cx="307.9" cy="307.5" r="1.6"/>
<circle cx="314.9" cy="309.3" r="1.6"/>
<circle cx="321.9" cy="310.5" r="1.6"/>
<circle cx="328.9" cy="311.7" r="1.6"/>
<circle cx="335.9" cy="312.5" r="1.6"/>
<circle cx="343.9" cy="313.3" r="1.6"/>
<circle cx="350.9" cy="315.5" r="1.6"/>
<circle cx="357.9" cy="316.7" r="1.6"/>
<circle cx="364.9" cy="316.7" r="1.6"/>
<circle cx="371.9" cy="317.5" r="1.6"/>
<circle cx="378.9" cy="317.5" r="1.6"/>
<circle cx="386.9" cy="317.5" r="1.6"/>
<circle cx="393.9" cy="317.5" r="1.6"/>
<circle cx="400.9" cy="317.5" r="1.6"/>
<circle cx="407.9" cy="316.7" r="1.6"/>
<circle cx="414.9" cy="316.7" r="1.6"/>
<circle cx="421.9" cy="317.5" r="1.6"/>
<circle cx="429.9" cy="317.5" r="1.6"/>
<circle cx="436.9" cy="318.3" r="1.6"/>
<circle cx="443.9" cy="318.3" r="1.6"/>
<circle cx="450.9" cy="318.3" r="1.6"/>
<circle cx="457.9" cy="318.3" r="1.6"/>
<circle cx="465.9" cy="318.3" r="1.6"/>
<circle cx="472.9" cy="317.5" r="1.6"/>
<circle cx="479.9" cy="316.7" r="1.6"/>
<circle cx="486.9" cy="315.3" r="1.6"/>
<circle cx="493.9" cy="313.3" r="1.6"/>
<circle cx="500.9" cy="312.5" r="1.6"/>
<circle cx="508.9" cy="310.3" r="1.6"/>
<circle cx="515.9" cy="308.3" r="1.6"/>
<circle cx="522.9" cy="305.3" r="1.6"/>
<circle cx="529.9" cy="303.3" r="1.6"/>
<circle cx="536.9" cy="301.7" r="1.6"/>
<circle cx="543.9" cy="298.7" r="1.6"/>
<circle cx="551.9" cy="296.3" r="1.6"/>
<circle cx="558.9" cy="294.2" r="1.6"/>
<circle cx="565.9" cy="292.5" r="1.6"/>
<circle cx="572.9" cy="291.3" r="1.6"/>
<circle cx="579.9" cy="289.7" r="1.6"/>
<circle cx="586.9" cy="288.7" r="1.6"/>
<circle cx="594.9" cy="287.5" r="1.6"/>
<circle cx="601.9" cy="286.3" r="1.6"/>
<circle cx="608.9" cy="284.5" r="1.6"/>
<circle cx="615.9" cy="283.3" r="1.6"/>
<circle cx="622.9" cy="282.5" r="1.6"/>
<circle cx="630.9" cy="282.5" r="1.6"/>
<circle cx="637.9" cy="281.3" r="1.6"/>
<circle cx="644.9" cy="281.3" r="1.6"/>
<circle cx="651.9" cy="282.5" r="1.6"/>
<circle cx="658.9" cy="283.3" r="1.6"/>
<circle cx="665.9" cy="284.5" r="1.6"/>
<circle cx="673.9" cy="286.3" r="1.6"/>
<circle cx="680.9" cy="287.5" r="1.6"/>
<circle cx="687.9" cy="288.7" r="1.6"/>
<circle cx="694.9" cy="289.5" r="1.6"/>
<circle cx="701.9" cy="290.5" r="1.6"/>
<circle cx="708.9" cy="290.5" r="1.6"/>
<circle cx="716.9" cy="290.5" r="1.6"/>
<circle cx="723.9" cy="289.5" r="1.6"/>
<circle cx="730.9" cy="289.5" r="1.6"/>
<circle cx="737.9" cy="288.7" r="1.6"/>
<circle cx="744.9" cy="288.7" r="1.6"/>
<circle cx="752.9" cy="288.7" r="1.6"/>
<circle cx="759.9" cy="289.5" r="1.6"/>
<circle cx="766.9" cy="289.5" r="1.6"/>
<circle cx="773.9" cy="290.5" r="1.6"/>
<circle cx="780.9" cy="290.5" r="1.6"/>
<circle cx="787.9" cy="290.5" r="1.6"/>
<circle cx="795.9" cy="291.3" r="1.6"/>
<circle cx="802.9" cy="292.5" r="1.6"/>
<circle cx="809.9" cy="292.5" r="1.6"/>
<circle cx="816.9" cy="293.7" r="1.6"/>
<circle cx="823.9" cy="294.7" r="1.6"/>
<circle cx="830.9" cy="295.8" r="1.6"/>
<circle cx="838.9" cy="297.0" r="1.6"/>
<circle cx="845.9" cy="297.5" r="1.6"/>
<circle cx="852.9" cy="297.5" r="1.6"/>
<circle cx="859.9" cy="298.3" r="1.6"/>
</g>
<path d="M16 343H859.3" stroke="#1717a6" stroke-width="1.7"/>
<path d="M16 393H859.3" stroke="#1717a6" stroke-width="1.7"/>
<path d="M16.0 347.5L20.3 345.8" stroke="#ee8a30" stroke-width="1.1" stroke-linecap="round" fill="none"/>
<path d="M20.3 345.8L24.2 343.8" stroke="#ee8a30" stroke-width="1.1" stroke-linecap="round" fill="none"/>
<path d="M24.2 343.8L35.0 342.5" stroke="#d428d4" stroke-width="1.1" stroke-linecap="round" fill="none"/>
<path d="M35.0 342.5L41.2 339.7" stroke="#d428d4" stroke-width="1.1" stroke-linecap="round" fill="none"/>
<path d="M41.2 339.7L42.5 343.0" stroke="#d428d4" stroke-width="1.1" stroke-linecap="round" fill="none"/>
<path d="M42.5 343.0L48.7 366.7" stroke="#ee8a30" stroke-width="1.1" stroke-linecap="round" fill="none"/>
<path d="M48.7 366.7L55.8 364.7" stroke="#ee8a30" stroke-width="1.1" stroke-linecap="round" fill="none"/>
<path d="M55.8 364.7L63.7 364.7" stroke="#ee8a30" stroke-width="1.1" stroke-linecap="round" fill="none"/>
<path d="M63.7 364.7L70.3 362.5" stroke="#ee8a30" stroke-width="1.1" stroke-linecap="round" fill="none"/>
<path d="M70.3 362.5L77.5 352.5" stroke="#ee8a30" stroke-width="1.1" stroke-linecap="round" fill="none"/>
<path d="M77.5 352.5L84.5 345.3" stroke="#ee8a30" stroke-width="1.1" stroke-linecap="round" fill="none"/>
<path d="M84.5 345.3L91.7 345.3" stroke="#ee8a30" stroke-width="1.1" stroke-linecap="round" fill="none"/>
<path d="M91.7 345.3L95.0 343.7" stroke="#ee8a30" stroke-width="1.1" stroke-linecap="round" fill="none"/>
<path d="M95.0 343.7L99.2 342.2" stroke="#d428d4" stroke-width="1.1" stroke-linecap="round" fill="none"/>
<path d="M99.2 342.2L101.3 343.3" stroke="#ee8a30" stroke-width="1.1" stroke-linecap="round" fill="none"/>
<path d="M101.3 343.3L106.7 348.3" stroke="#ee8a30" stroke-width="1.1" stroke-linecap="round" fill="none"/>
<path d="M106.7 348.3L113.3 361.7" stroke="#ee8a30" stroke-width="1.1" stroke-linecap="round" fill="none"/>
<path d="M113.3 361.7L120.3 375.5" stroke="#ee8a30" stroke-width="1.1" stroke-linecap="round" fill="none"/>
<path d="M120.3 375.5L127.5 365.0" stroke="#ee8a30" stroke-width="1.1" stroke-linecap="round" fill="none"/>
<path d="M127.5 365.0L134.5 332.5" stroke="#d428d4" stroke-width="1.1" stroke-linecap="round" fill="none"/>
<path d="M134.5 332.5L142.5 333.0" stroke="#d428d4" stroke-width="1.1" stroke-linecap="round" fill="none"/>
<path d="M142.5 333.0L149.2 343.0" stroke="#d428d4" stroke-width="1.1" stroke-linecap="round" fill="none"/>
<path d="M149.2 343.0L156.7 344.7" stroke="#ee8a30" stroke-width="1.1" stroke-linecap="round" fill="none"/>
<path d="M156.7 344.7L163.3 350.8" stroke="#ee8a30" stroke-width="1.1" stroke-linecap="round" fill="none"/>
<path d="M163.3 350.8L170.3 357.2" stroke="#ee8a30" stroke-width="1.1" stroke-linecap="round" fill="none"/>
<path d="M170.3 357.2L177.5 353.3" stroke="#ee8a30" stroke-width="1.1" stroke-linecap="round" fill="none"/>
<path d="M177.5 353.3L185.0 350.3" stroke="#ee8a30" stroke-width="1.1" stroke-linecap="round" fill="none"/>
<path d="M185.0 350.3L192.5 354.7" stroke="#ee8a30" stroke-width="1.1" stroke-linecap="round" fill="none"/>
<path d="M192.5 354.7L198.7 353.0" stroke="#ee8a30" stroke-width="1.1" stroke-linecap="round" fill="none"/>
<path d="M198.7 353.0L206.7 360.8" stroke="#ee8a30" stroke-width="1.1" stroke-linecap="round" fill="none"/>
<path d="M206.7 360.8L212.8 359.2" stroke="#ee8a30" stroke-width="1.1" stroke-linecap="round" fill="none"/>
<path d="M212.8 359.2L220.8 368.0" stroke="#ee8a30" stroke-width="1.1" stroke-linecap="round" fill="none"/>
<path d="M220.8 368.0L228.3 366.3" stroke="#ee8a30" stroke-width="1.1" stroke-linecap="round" fill="none"/>
<path d="M228.3 366.3L235.8 378.3" stroke="#ee8a30" stroke-width="1.1" stroke-linecap="round" fill="none"/>
<path d="M235.8 378.3L242.8 379.2" stroke="#ee8a30" stroke-width="1.1" stroke-linecap="round" fill="none"/>
<path d="M242.8 379.2L249.8 386.7" stroke="#ee8a30" stroke-width="1.1" stroke-linecap="round" fill="none"/>
<path d="M249.8 386.7L256.7 384.2" stroke="#ee8a30" stroke-width="1.1" stroke-linecap="round" fill="none"/>
<path d="M256.7 384.2L263.8 385.0" stroke="#ee8a30" stroke-width="1.1" stroke-linecap="round" fill="none"/>
<path d="M263.8 385.0L270.8 387.5" stroke="#ee8a30" stroke-width="1.1" stroke-linecap="round" fill="none"/>
<path d="M270.8 387.5L281.3 387.5" stroke="#ee8a30" stroke-width="1.1" stroke-linecap="round" fill="none"/>
<path d="M281.3 387.5L283.3 388.3" stroke="#ee8a30" stroke-width="1.1" stroke-linecap="round" fill="none"/>
<path d="M283.3 388.3L290.8 389.2" stroke="#ee8a30" stroke-width="1.1" stroke-linecap="round" fill="none"/>
<path d="M290.8 389.2L299.2 387.5" stroke="#ee8a30" stroke-width="1.1" stroke-linecap="round" fill="none"/>
<path d="M299.2 387.5L307.5 387.5" stroke="#ee8a30" stroke-width="1.1" stroke-linecap="round" fill="none"/>
<path d="M307.5 387.5L313.3 388.3" stroke="#ee8a30" stroke-width="1.1" stroke-linecap="round" fill="none"/>
<path d="M313.3 388.3L321.7 382.5" stroke="#ee8a30" stroke-width="1.1" stroke-linecap="round" fill="none"/>
<path d="M321.7 382.5L327.5 385.0" stroke="#ee8a30" stroke-width="1.1" stroke-linecap="round" fill="none"/>
<path d="M327.5 385.0L335.3 392.0" stroke="#ee8a30" stroke-width="1.1" stroke-linecap="round" fill="none"/>
<path d="M335.3 392.0L338.3 393.0" stroke="#ee8a30" stroke-width="1.1" stroke-linecap="round" fill="none"/>
<path d="M338.3 393.0L342.5 394.7" stroke="#2bd02b" stroke-width="1.1" stroke-linecap="round" fill="none"/>
<path d="M342.5 394.7L350.8 394.7" stroke="#2bd02b" stroke-width="1.1" stroke-linecap="round" fill="none"/>
<path d="M350.8 394.7L354.2 392.5" stroke="#ee8a30" stroke-width="1.1" stroke-linecap="round" fill="none"/>
<path d="M354.2 392.5L364.2 387.5" stroke="#ee8a30" stroke-width="1.1" stroke-linecap="round" fill="none"/>
<path d="M364.2 387.5L373.3 387.5" stroke="#ee8a30" stroke-width="1.1" stroke-linecap="round" fill="none"/>
<path d="M373.3 387.5L377.5 386.3" stroke="#ee8a30" stroke-width="1.1" stroke-linecap="round" fill="none"/>
<path d="M377.5 386.3L386.7 391.3" stroke="#ee8a30" stroke-width="1.1" stroke-linecap="round" fill="none"/>
<path d="M386.7 391.3L394.2 390.5" stroke="#ee8a30" stroke-width="1.1" stroke-linecap="round" fill="none"/>
<path d="M394.2 390.5L400.8 388.3" stroke="#ee8a30" stroke-width="1.1" stroke-linecap="round" fill="none"/>
<path d="M400.8 388.3L407.5 384.2" stroke="#ee8a30" stroke-width="1.1" stroke-linecap="round" fill="none"/>
<path d="M407.5 384.2L413.7 395.8" stroke="#2bd02b" stroke-width="1.1" stroke-linecap="round" fill="none"/>
<path d="M413.7 395.8L420.8 399.5" stroke="#2bd02b" stroke-width="1.1" stroke-linecap="round" fill="none"/>
<path d="M420.8 399.5L429.2 391.3" stroke="#ee8a30" stroke-width="1.1" stroke-linecap="round" fill="none"/>
<path d="M429.2 391.3L446.7 391.3" stroke="#ee8a30" stroke-width="1.1" stroke-linecap="round" fill="none"/>
<path d="M446.7 391.3L450.0 393.0" stroke="#ee8a30" stroke-width="1.1" stroke-linecap="round" fill="none"/>
<path d="M450.0 393.0L458.3 384.7" stroke="#ee8a30" stroke-width="1.1" stroke-linecap="round" fill="none"/>
<path d="M458.3 384.7L465.0 383.0" stroke="#ee8a30" stroke-width="1.1" stroke-linecap="round" fill="none"/>
<path d="M465.0 383.0L471.7 382.0" stroke="#ee8a30" stroke-width="1.1" stroke-linecap="round" fill="none"/>
<path d="M471.7 382.0L479.2 371.3" stroke="#ee8a30" stroke-width="1.1" stroke-linecap="round" fill="none"/>
<path d="M479.2 371.3L486.7 371.3" stroke="#ee8a30" stroke-width="1.1" stroke-linecap="round" fill="none"/>
<path d="M486.7 371.3L493.3 373.7" stroke="#ee8a30" stroke-width="1.1" stroke-linecap="round" fill="none"/>
<path d="M493.3 373.7L500.8 370.0" stroke="#ee8a30" stroke-width="1.1" stroke-linecap="round" fill="none"/>
<path d="M500.8 370.0L508.3 355.8" stroke="#ee8a30" stroke-width="1.1" stroke-linecap="round" fill="none"/>
<path d="M508.3 355.8L515.8 351.2" stroke="#ee8a30" stroke-width="1.1" stroke-linecap="round" fill="none"/>
<path d="M515.8 351.2L522.5 353.3" stroke="#ee8a30" stroke-width="1.1" stroke-linecap="round" fill="none"/>
<path d="M522.5 353.3L529.7 357.2" stroke="#ee8a30" stroke-width="1.1" stroke-linecap="round" fill="none"/>
<path d="M529.7 357.2L536.7 353.3" stroke="#ee8a30" stroke-width="1.1" stroke-linecap="round" fill="none"/>
<path d="M536.7 353.3L543.3 350.3" stroke="#ee8a30" stroke-width="1.1" stroke-linecap="round" fill="none"/>
<path d="M543.3 350.3L551.3 356.3" stroke="#ee8a30" stroke-width="1.1" stroke-linecap="round" fill="none"/>
<path d="M551.3 356.3L557.5 349.5" stroke="#ee8a30" stroke-width="1.1" stroke-linecap="round" fill="none"/>
<path d="M557.5 349.5L565.3 348.3" stroke="#ee8a30" stroke-width="1.1" stroke-linecap="round" fill="none"/>
<path d="M565.3 348.3L572.5 358.3" stroke="#ee8a30" stroke-width="1.1" stroke-linecap="round" fill="none"/>
<path d="M572.5 358.3L579.7 356.3" stroke="#ee8a30" stroke-width="1.1" stroke-linecap="round" fill="none"/>
<path d="M579.7 356.3L586.7 355.0" stroke="#ee8a30" stroke-width="1.1" stroke-linecap="round" fill="none"/>
<path d="M586.7 355.0L593.7 352.5" stroke="#ee8a30" stroke-width="1.1" stroke-linecap="round" fill="none"/>
<path d="M593.7 352.5L601.7 341.7" stroke="#d428d4" stroke-width="1.1" stroke-linecap="round" fill="none"/>
<path d="M601.7 341.7L608.3 340.3" stroke="#d428d4" stroke-width="1.1" stroke-linecap="round" fill="none"/>
<path d="M608.3 340.3L610.8 342.5" stroke="#d428d4" stroke-width="1.1" stroke-linecap="round" fill="none"/>
<path d="M610.8 342.5L615.8 348.3" stroke="#ee8a30" stroke-width="1.1" stroke-linecap="round" fill="none"/>
<path d="M615.8 348.3L622.5 363.3" stroke="#ee8a30" stroke-width="1.1" stroke-linecap="round" fill="none"/>
<path d="M622.5 363.3L630.0 360.8" stroke="#ee8a30" stroke-width="1.1" stroke-linecap="round" fill="none"/>
<path d="M630.0 360.8L637.0 359.5" stroke="#ee8a30" stroke-width="1.1" stroke-linecap="round" fill="none"/>
<path d="M637.0 359.5L644.2 365.0" stroke="#ee8a30" stroke-width="1.1" stroke-linecap="round" fill="none"/>
<path d="M644.2 365.0L653.3 372.5" stroke="#ee8a30" stroke-width="1.1" stroke-linecap="round" fill="none"/>
<path d="M653.3 372.5L659.2 373.3" stroke="#ee8a30" stroke-width="1.1" stroke-linecap="round" fill="none"/>
<path d="M659.2 373.3L665.8 371.3" stroke="#ee8a30" stroke-width="1.1" stroke-linecap="round" fill="none"/>
<path d="M665.8 371.3L674.2 375.3" stroke="#ee8a30" stroke-width="1.1" stroke-linecap="round" fill="none"/>
<path d="M674.2 375.3L680.8 373.7" stroke="#ee8a30" stroke-width="1.1" stroke-linecap="round" fill="none"/>
<path d="M680.8 373.7L687.5 372.5" stroke="#ee8a30" stroke-width="1.1" stroke-linecap="round" fill="none"/>
<path d="M687.5 372.5L695.0 367.5" stroke="#ee8a30" stroke-width="1.1" stroke-linecap="round" fill="none"/>
<path d="M695.0 367.5L702.5 359.5" stroke="#ee8a30" stroke-width="1.1" stroke-linecap="round" fill="none"/>
<path d="M702.5 359.5L709.2 356.3" stroke="#ee8a30" stroke-width="1.1" stroke-linecap="round" fill="none"/>
<path d="M709.2 356.3L716.7 355.0" stroke="#ee8a30" stroke-width="1.1" stroke-linecap="round" fill="none"/>
<path d="M716.7 355.0L723.3 354.7" stroke="#ee8a30" stroke-width="1.1" stroke-linecap="round" fill="none"/>
<path d="M723.3 354.7L730.0 355.3" stroke="#ee8a30" stroke-width="1.1" stroke-linecap="round" fill="none"/>
<path d="M730.0 355.3L737.5 351.5" stroke="#ee8a30" stroke-width="1.1" stroke-linecap="round" fill="none"/>
<path d="M737.5 351.5L744.7 369.2" stroke="#ee8a30" stroke-width="1.1" stroke-linecap="round" fill="none"/>
<path d="M744.7 369.2L751.7 368.3" stroke="#ee8a30" stroke-width="1.1" stroke-linecap="round" fill="none"/>
<path d="M751.7 368.3L759.2 370.3" stroke="#ee8a30" stroke-width="1.1" stroke-linecap="round" fill="none"/>
<path d="M759.2 370.3L766.7 371.3" stroke="#ee8a30" stroke-width="1.1" stroke-linecap="round" fill="none"/>
<path d="M766.7 371.3L773.3 369.2" stroke="#ee8a30" stroke-width="1.1" stroke-linecap="round" fill="none"/>
<path d="M773.3 369.2L780.3 358.8" stroke="#ee8a30" stroke-width="1.1" stroke-linecap="round" fill="none"/>
<path d="M780.3 358.8L788.0 374.5" stroke="#ee8a30" stroke-width="1.1" stroke-linecap="round" fill="none"/>
<path d="M788.0 374.5L795.0 371.7" stroke="#ee8a30" stroke-width="1.1" stroke-linecap="round" fill="none"/>
<path d="M795.0 371.7L802.5 373.3" stroke="#ee8a30" stroke-width="1.1" stroke-linecap="round" fill="none"/>
<path d="M802.5 373.3L809.5 370.3" stroke="#ee8a30" stroke-width="1.1" stroke-linecap="round" fill="none"/>
<path d="M809.5 370.3L816.7 370.3" stroke="#ee8a30" stroke-width="1.1" stroke-linecap="round" fill="none"/>
<path d="M816.7 370.3L823.3 375.5" stroke="#ee8a30" stroke-width="1.1" stroke-linecap="round" fill="none"/>
<path d="M823.3 375.5L830.3 384.2" stroke="#ee8a30" stroke-width="1.1" stroke-linecap="round" fill="none"/>
<path d="M830.3 384.2L838.3 376.3" stroke="#ee8a30" stroke-width="1.1" stroke-linecap="round" fill="none"/>
<path d="M838.3 376.3L843.3 377.5" stroke="#ee8a30" stroke-width="1.1" stroke-linecap="round" fill="none"/>
<path d="M843.3 377.5L858.8 377.5" stroke="#ee8a30" stroke-width="1.1" stroke-linecap="round" fill="none"/>
<rect x="15.5" y="38.5" width="873.0" height="220.0" fill="none" stroke="#a9bccf" stroke-width="1"/>
<rect x="15.5" y="264.5" width="873.0" height="59.0" fill="none" stroke="#a9bccf" stroke-width="1"/>
<rect x="15.5" y="329.5" width="873.0" height="73.0" fill="none" stroke="#a9bccf" stroke-width="1"/>
<g stroke="#a9bccf" stroke-width="1">
<path d="M888.5 48.4H892"/>
<path d="M888.5 74.5H892"/>
<path d="M888.5 100.6H892"/>
<path d="M888.5 126.7H892"/>
<path d="M888.5 153.2H892"/>
<path d="M888.5 179.1H892"/>
<path d="M888.5 205.4H892"/>
<path d="M888.5 231.5H892"/>
<path d="M888.5 295.3H892"/><path d="M888.5 368.3H892"/>
<path d="M48.5 402.5V406"/>
<path d="M91.5 402.5V406"/>
<path d="M134.5 402.5V406"/>
<path d="M177.5 402.5V406"/>
<path d="M221.5 402.5V406"/>
<path d="M264.5 402.5V406"/>
<path d="M307.5 402.5V406"/>
<path d="M350.5 402.5V406"/>
<path d="M393.5 402.5V406"/>
<path d="M436.5 402.5V406"/>
<path d="M472.5 402.5V406"/>
<path d="M493.5 402.5V406"/>
<path d="M536.5 402.5V406"/>
<path d="M579.5 402.5V406"/>
<path d="M637.5 402.5V406"/>
<path d="M680.5 402.5V406"/>
<path d="M723.5 402.5V406"/>
<path d="M766.5 402.5V406"/>
<path d="M809.5 402.5V406"/>
<path d="M852.5 402.5V406"/>
<path d="M608.5 402.5V406"/>
</g>
<g fill="#ea8238"><rect x="133.6" y="38" width="1.6" height="1"/><rect x="162.6" y="38" width="1" height="1"/><rect x="170.2" y="38" width="1" height="1"/><rect x="221" y="38" width="1" height="1"/></g>
<text x="18" y="50.2" font-family="'Liberation Sans', sans-serif" font-size="11.3" fill="#1818e8" textLength="133.5" lengthAdjust="spacingAndGlyphs">Exponential_Moving_Average</text>
<text x="155.8" y="50.2" font-family="'Liberation Sans', sans-serif" font-size="11.3" fill="#ee1c24" textLength="134" lengthAdjust="spacingAndGlyphs">Exponential_Moving_Average</text>
<text x="17.6" y="275.6" font-family="'Liberation Sans', sans-serif" font-size="11.3" fill="#0a0a82" textLength="28" lengthAdjust="spacingAndGlyphs">MACD</text>
<text x="17.6" y="340.8" font-family="'Liberation Sans', sans-serif" font-size="11.3" fill="#ee8a38" textLength="14.5" lengthAdjust="spacingAndGlyphs">RSI</text>
<rect x="15" y="38" width="31.2" height="22" fill="#f3f3f3"/>
<rect x="15" y="38" width="31.2" height="5" fill="#d2d2d2"/>
<rect x="19.2" y="46" width="9.6" height="9.6" rx="1.6" fill="url(#lr)" stroke="#b01020" stroke-width="0.6"/>
<rect x="32.2" y="46" width="9.6" height="9.6" rx="1.6" fill="url(#lb)" stroke="#0a68a8" stroke-width="0.6"/>
<g font-family="'Liberation Sans', sans-serif" font-size="11.4" fill="#ffffff">
<text x="895.6" y="54.8" textLength="33.1" lengthAdjust="spacingAndGlyphs">1.3300</text>
<text x="895.6" y="80.9" textLength="33.1" lengthAdjust="spacingAndGlyphs">1.3250</text>
<text x="895.6" y="107.0" textLength="33.1" lengthAdjust="spacingAndGlyphs">1.3200</text>
<text x="895.6" y="133.1" textLength="33.1" lengthAdjust="spacingAndGlyphs">1.3150</text>
<text x="895.6" y="159.6" textLength="33.1" lengthAdjust="spacingAndGlyphs">1.3100</text>
<text x="895.6" y="185.5" textLength="33.1" lengthAdjust="spacingAndGlyphs">1.3050</text>
<text x="895.6" y="211.8" textLength="33.1" lengthAdjust="spacingAndGlyphs">1.3000</text>
<text x="895.6" y="237.9" textLength="33.1" lengthAdjust="spacingAndGlyphs">1.2950</text>
<text x="896.6" y="302.2" textLength="23.4" lengthAdjust="spacingAndGlyphs">-0.00</text>
<text x="896.6" y="375.2" textLength="10.6" lengthAdjust="spacingAndGlyphs">50</text>
<text x="36.2" y="424.9" textLength="28.4" lengthAdjust="spacingAndGlyphs">11/Ср</text>
<text x="79.2" y="424.9" textLength="27.9" lengthAdjust="spacingAndGlyphs">12/Чт</text>
<text x="122.2" y="424.9" textLength="27.4" lengthAdjust="spacingAndGlyphs">13/Пт</text>
<text x="165.2" y="424.9" textLength="29.4" lengthAdjust="spacingAndGlyphs">16/Пн</text>
<text x="208.7" y="424.9" textLength="26.2" lengthAdjust="spacingAndGlyphs">17/Вт</text>
<text x="251.9" y="424.9" textLength="28.2" lengthAdjust="spacingAndGlyphs">18/Ср</text>
<text x="295.0" y="424.9" textLength="27.9" lengthAdjust="spacingAndGlyphs">19/Чт</text>
<text x="338.1" y="424.9" textLength="27.4" lengthAdjust="spacingAndGlyphs">20/Пт</text>
<text x="381.2" y="424.9" textLength="29.6" lengthAdjust="spacingAndGlyphs">23/Пн</text>
<text x="424.2" y="424.9" textLength="26.2" lengthAdjust="spacingAndGlyphs">24/Вт</text>
<text x="460.2" y="424.9" textLength="27.9" lengthAdjust="spacingAndGlyphs">26/Чт</text>
<text x="481.2" y="424.9" textLength="27.2" lengthAdjust="spacingAndGlyphs">27/Пт</text>
<text x="524.2" y="424.9" textLength="29.2" lengthAdjust="spacingAndGlyphs">30/Пн</text>
<text x="567.2" y="424.9" textLength="25.9" lengthAdjust="spacingAndGlyphs">31/Вт</text>
<text x="602.3" y="424.9" textLength="20.9" lengthAdjust="spacingAndGlyphs">2/Чт</text>
<text x="631.3" y="424.9" textLength="21.1" lengthAdjust="spacingAndGlyphs">3/Пт</text>
<text x="674.4" y="424.9" textLength="23.2" lengthAdjust="spacingAndGlyphs">6/Пн</text>
<text x="717.4" y="424.9" textLength="19.9" lengthAdjust="spacingAndGlyphs">7/Вт</text>
<text x="760.4" y="424.9" textLength="22.4" lengthAdjust="spacingAndGlyphs">8/Ср</text>
<text x="803.3" y="424.9" textLength="21.6" lengthAdjust="spacingAndGlyphs">9/Чт</text>
<text x="840.2" y="424.9" textLength="27.4" lengthAdjust="spacingAndGlyphs">10/Пт</text>
</g>
<rect x="888.4" y="162.2" width="47.4" height="20.6" fill="#ffffff"/>
<text x="896.7" y="175.5" font-family="'Liberation Sans', sans-serif" font-size="11.4" fill="#46455a" textLength="32.8" lengthAdjust="spacingAndGlyphs">1.3062</text>
<rect x="16.3" y="379.3" width="59.6" height="19" rx="2.5" fill="#5f6d83" stroke="#a8b8c8" stroke-width="0.9"/>
<rect x="15.3" y="379" width="1.8" height="27" fill="#cfe3e6"/>
<text x="23" y="393" font-family="'Liberation Sans', sans-serif" font-size="11.4" fill="#eef2f4" textLength="46.2" lengthAdjust="spacingAndGlyphs">Дек 2019</text>
<rect x="608.8" y="379.3" width="60.8" height="19" rx="2.5" fill="#5f6d83" stroke="#a8b8c8" stroke-width="0.9"/>
<rect x="607.8" y="379" width="1.8" height="27" fill="#cfe3e6"/>
<text x="615.9" y="393" font-family="'Liberation Sans', sans-serif" font-size="11.4" fill="#eef2f4" textLength="46.2" lengthAdjust="spacingAndGlyphs">Янв 2020</text>
</svg>
</body></html>
